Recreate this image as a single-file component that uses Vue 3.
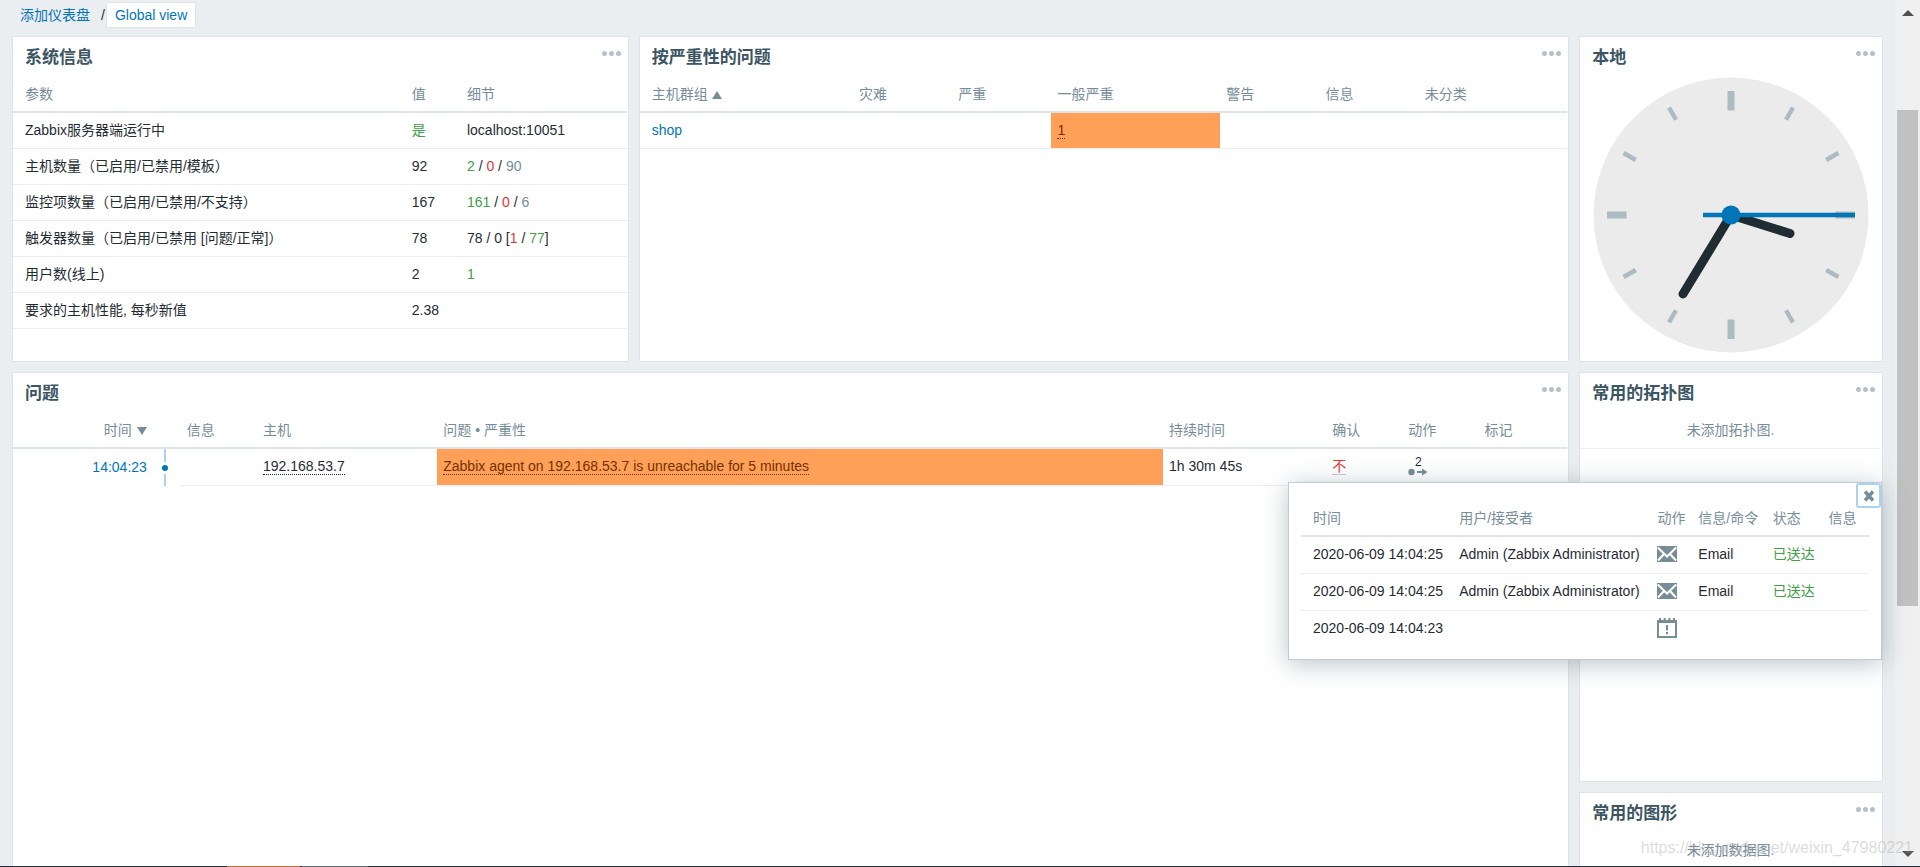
<script setup>
const sysRows = [
  { name: 'Zabbix服务器端运行中', value: '是', good: true, parts: [['localhost:10051', '']] },
  { name: '主机数量（已启用/已禁用/模板）', value: '92', parts: [['2', 'green'], [' / ', ''], ['0', 'red'], [' / ', ''], ['90', 'grey']] },
  { name: '监控项数量（已启用/已禁用/不支持）', value: '167', parts: [['161', 'green'], [' / ', ''], ['0', 'red'], [' / ', ''], ['6', 'grey']] },
  { name: '触发器数量（已启用/已禁用 [问题/正常]）', value: '78', parts: [['78 / 0 [', ''], ['1', 'red'], [' / ', ''], ['77', 'green'], [']', '']] },
  { name: '用户数(线上)', value: '2', parts: [['1', 'green']] },
  { name: '要求的主机性能, 每秒新值', value: '2.38', parts: [] },
]
const actions = [
  { time: '2020-06-09 14:04:25', user: 'Admin (Zabbix Administrator)', icon: 'mail', command: 'Email', status: '已送达' },
  { time: '2020-06-09 14:04:25', user: 'Admin (Zabbix Administrator)', icon: 'mail', command: 'Email', status: '已送达' },
  { time: '2020-06-09 14:04:23', user: '', icon: 'event', command: '', status: '' },
]
const ticks = Array.from({ length: 12 }, (_, i) => ({ angle: i * 30, major: i % 3 === 0 }))
</script>

<template>
  <div class="page">
    <div class="content">
      <nav class="crumbs" aria-label="仪表盘">
        <a href="#">添加仪表盘</a>
        <span class="slash">/</span>
        <a href="#" class="current">Global view</a>
      </nav>

      <main class="dashboard">
        <section class="widget system">
          <header><h4>系统信息</h4><button class="dots" aria-label="操作"><i></i><i></i><i></i></button></header>
          <table>
            <colgroup><col class="s1" /><col class="s2" /><col /></colgroup>
            <thead><tr><th>参数</th><th>值</th><th>细节</th></tr></thead>
            <tbody>
              <tr v-for="row in sysRows" :key="row.name">
                <td>{{ row.name }}</td>
                <td :class="{ green: row.good }">{{ row.value }}</td>
                <td class="pre"><span v-for="(p, i) in row.parts" :key="i" :class="p[1]">{{ p[0] }}</span></td>
              </tr>
            </tbody>
          </table>
        </section>

        <section class="widget severity">
          <header><h4>按严重性的问题</h4><button class="dots" aria-label="操作"><i></i><i></i><i></i></button></header>
          <table>
            <colgroup><col class="v1" /><col class="v2" /><col class="v2" /><col class="v3" /><col class="v2" /><col class="v2" /><col /></colgroup>
            <thead>
              <tr>
                <th><a href="#" class="sort">主机群组<i class="up"></i></a></th>
                <th>灾难</th><th>严重</th><th>一般严重</th><th>警告</th><th>信息</th><th>未分类</th>
              </tr>
            </thead>
            <tbody>
              <tr><td><a href="#">shop</a></td><td></td><td></td><td class="average"><a href="#" class="hint">1</a></td><td></td><td></td><td></td></tr>
            </tbody>
          </table>
        </section>

        <section class="widget clock">
          <header><h4>本地</h4><button class="dots" aria-label="操作"><i></i><i></i><i></i></button></header>
          <svg class="face" viewBox="-138 -138 276 276" role="img" aria-label="时钟">
            <circle r="137.5" fill="#ebebeb" />
            <rect
              v-for="t in ticks" :key="t.angle"
              :x="t.major ? -3.5 : -2.2" y="-124"
              :width="t.major ? 7 : 4.4" :height="t.major ? 19.5 : 14"
              :transform="`rotate(${t.angle})`" fill="#acbbc2"
            />
            <g stroke="#1f2c33" stroke-width="9" stroke-linecap="round">
              <path d="M0 0L59 18.5" />
              <path d="M0 0L-48 79" />
            </g>
            <path d="M-28 0H124" stroke="#0275b8" stroke-width="4.4" />
            <circle r="9.5" fill="#0275b8" />
          </svg>
        </section>

        <section class="widget problems">
          <header><h4>问题</h4><button class="dots" aria-label="操作"><i></i><i></i><i></i></button></header>
          <table>
            <colgroup><col class="p1" /><col class="p2" /><col class="p3" /><col class="p4" /><col class="p5" /><col class="p6" /><col class="p3" /><col class="p3" /><col /></colgroup>
            <thead>
              <tr>
                <th class="right"><a href="#" class="sort">时间<i class="down"></i></a></th><th></th>
                <th>信息</th><th>主机</th><th>问题 • 严重性</th><th>持续时间</th><th>确认</th><th>动作</th><th>标记</th>
              </tr>
            </thead>
            <tbody>
              <tr>
                <td class="right bare"><a href="#">14:04:23</a></td>
                <td class="bare axis"><span class="line"><i></i></span></td>
                <td></td>
                <td><a href="#" class="hint dark">192.168.53.7</a></td>
                <td class="average"><a href="#" class="hint">Zabbix agent on 192.168.53.7 is unreachable for 5 minutes</a></td>
                <td>1h 30m 45s</td>
                <td><a href="#" class="ack">不</a></td>
                <td>
                  <button class="count" aria-label="动作 2"><span>2</span>
                    <svg width="20" height="8" viewBox="0 0 20 8"><circle cx="3.5" cy="4" r="3.2" fill="#768d99" /><path d="M9 3h5V0.5L19.5 4 14 7.5V5H9z" fill="#768d99" /></svg>
                  </button>
                </td>
                <td></td>
              </tr>
            </tbody>
          </table>
        </section>

        <section class="widget maps">
          <header><h4>常用的拓扑图</h4><button class="dots" aria-label="操作"><i></i><i></i><i></i></button></header>
          <p class="empty">未添加拓扑图.</p>
        </section>

        <section class="widget graphs">
          <header><h4>常用的图形</h4><button class="dots" aria-label="操作"><i></i><i></i><i></i></button></header>
          <p class="empty">未添加数据图.</p>
        </section>
      </main>
    </div>

    <div class="scrollbar" aria-hidden="true">
      <i class="arrow-up"></i>
      <div class="track"><div class="thumb"></div></div>
      <i class="arrow-down"></i>
    </div>

    <aside class="popup" role="dialog" aria-label="动作">
      <button class="close" aria-label="关闭">
        <svg width="12" height="12" viewBox="0 0 12 12"><path d="M2 1.5l8 9M10 1.5l-8 9" stroke="#768d99" stroke-width="3.4" /></svg>
      </button>
      <table>
        <colgroup><col class="a1" /><col class="a2" /><col class="a3" /><col class="a4" /><col class="a5" /><col /></colgroup>
        <thead><tr><th>时间</th><th>用户/接受者</th><th>动作</th><th>信息/命令</th><th>状态</th><th>信息</th></tr></thead>
        <tbody>
          <tr v-for="(a, i) in actions" :key="i">
            <td>{{ a.time }}</td>
            <td>{{ a.user }}</td>
            <td>
              <svg v-if="a.icon === 'mail'" class="icon" width="20" height="20" viewBox="0 0 20 20">
                <path d="M0 2h20v16H0z" fill="#768d99" />
                <path d="M0.8 3.5L10 12.500l9.200-9M1 16.500l6-6.500M19 16.500l-6-6.500" fill="none" stroke="#fff" stroke-width="2" />
              </svg>
              <svg v-else class="icon" width="20" height="20" viewBox="0 0 20 20">
                <path d="M1 4h18v15H1z" fill="none" stroke="#768d99" stroke-width="2" />
                <path d="M0 2h20v3H0zM2 0h2v3h-2zM6.700 0h2v3h-2zM11.400 0h2v3h-2zM16 0h2v3h-2zM9 7h2v5.500H9zM9 14h2v2.200H9z" fill="#768d99" />
              </svg>
            </td>
            <td>{{ a.command }}</td>
            <td class="green">{{ a.status }}</td>
            <td></td>
          </tr>
        </tbody>
      </table>
    </aside>

    <div class="watermark">https://blog.csdn.net/weixin_47980221</div>
    <div class="taskbar"><i class="active"></i><i class="open"></i></div>
  </div>
</template>

<style>
html, body, #app { height: 100%; }
body { margin: 0; overflow: hidden; }
</style>

<style scoped>
* { box-sizing: border-box; }
.page {
  position: relative;
  display: flex;
  height: 100vh;
  overflow: hidden;
  background: #ebeef0;
  color: #1f2c33;
  font: 14px/18px "Liberation Sans", "Noto Sans CJK SC", sans-serif;
}
.content { flex: 1; min-width: 0; display: flex; flex-direction: column; padding: 2px 12px 0; }
a { color: #0275b8; text-decoration: none; }
button { margin: 0; padding: 0; border: 0; background: none; font: inherit; color: inherit; cursor: pointer; }
.crumbs { display: flex; align-items: center; height: 26px; padding-left: 8px; margin-bottom: 8px; }
.slash { margin: 0 1px 0 11px; }
.crumbs .current { padding: 3px 8px; line-height: 18px; background: #fff; border: 1px solid #dfe4e7; border-radius: 2px; }

.dashboard {
  flex: 1;
  display: grid;
  grid-template-columns: 617fr 931fr 304fr;
  grid-template-rows: 326px 410px 326px;
  gap: 10px;
}
.widget { min-width: 0; background: #fff; border: 1px solid #dfe4e7; padding-right: 1px; }
.problems { grid-column: 1 / 3; grid-row: 2 / 4; }
.widget header { display: flex; justify-content: space-between; align-items: flex-start; height: 40px; padding: 9px 6px 0 12px; }
h4 { margin: 0; font-size: 17px; line-height: 24px; font-weight: 700; color: #3c5563; }
.dots { display: flex; gap: 2px; padding: 5px 0; }
.dots i { width: 5px; height: 5px; border-radius: 50%; background: #b4c1c9; }

table { width: 100%; table-layout: fixed; border-collapse: separate; border-spacing: 0; }
th, td { height: 36px; padding: 0 6px; text-align: left; white-space: nowrap; border-bottom: 1px solid #ebeef0; }
td { padding-bottom: 2px; }
th { font-weight: 400; color: #768d99; border-bottom: 2px solid #dfe4e7; }
th:first-child, td:first-child { padding-left: 12px; }
.problems td { height: 37px; }
.pre { white-space: pre; }
.right { text-align: right; }
.green { color: #429e47; }
.red { color: #e33734; }
.grey { color: #768d99; }
.s1 { width: 64%; } .s2 { width: 9%; }
.v1 { width: 23%; } .v2 { width: 10.7%; } .v3 { width: 18.2%; }
.p1 { width: 9%; } .p2 { width: 1.8%; } .p3 { width: 4.9%; } .p4 { width: 11.6%; } .p5 { width: 46.7%; } .p6 { width: 10.5%; }
.sort { color: #768d99; }
.sort i { display: inline-block; margin-left: 4px; border: 5px solid transparent; }
.sort .up { border-top: 0; border-bottom: 8px solid #768d99; }
.sort .down { border-bottom: 0; border-top: 8px solid #768d99; margin-left: 5px; }
.average { background: #ffa059; }
.hint { color: #733100; border-bottom: 1px dotted #733100; }
.hint.dark { color: #1f2c33; border-color: #1f2c33; }
.ack { color: #e33734; border-bottom: 1px solid #c0ccd4; }
td.bare { border-bottom: 0; }
td.axis { padding: 0; }
.line { display: flex; justify-content: center; align-items: center; width: 24px; height: 37px; background: linear-gradient(#a8d5ec, #a8d5ec) center / 2px 100% no-repeat; }
.line i { width: 6px; height: 6px; border-radius: 50%; background: #0275b8; box-shadow: 0 0 0 3px #fff; }
.count { display: flex; flex-direction: column; align-items: flex-start; font-size: 12px; line-height: 12px; }
.count span { width: 20px; text-align: center; }
.count svg { display: block; }
.face { display: block; width: 276px; max-width: 100%; margin: 0 auto; }
.empty { margin: 0; height: 36px; line-height: 35px; text-align: center; color: #768d99; border-bottom: 1px solid #ebeef0; }

.scrollbar { width: 25px; display: flex; flex-direction: column; align-items: center; background: #f0f0f0; padding: 10px 0; }
.arrow-up { border: 6px solid transparent; border-top: 0; border-bottom: 6px solid #505050; }
.arrow-down { border: 6px solid transparent; border-bottom: 0; border-top: 6px solid #505050; }
.track { flex: 1; width: 21px; padding-top: 94px; }
.thumb { height: 67%; background: #c1c1c1; }

.popup {
  position: absolute; top: 482px; right: 38px; width: 594px;
  padding: 17px 12px 11px; background: #fff; border: 1px solid #c0ccd4;
  box-shadow: 0 4px 24px rgba(60, 85, 99, .35);
}
.popup th, .popup td { height: 37px; }
.popup tbody tr:last-child td { border-bottom-color: transparent; }
.close {
  position: absolute; top: 0; right: 0; width: 25px; height: 25px;
  display: flex; align-items: center; justify-content: center;
  background: #fff; border: 2px solid #a9d3f3; border-radius: 3px;
}
.icon { display: block; }
.a1 { width: 26.8%; } .a2 { width: 34.9%; } .a3 { width: 7.2%; } .a4 { width: 13.1%; } .a5 { width: 9.8%; }

.watermark { position: absolute; right: 7px; bottom: 8px; font: 16px/22px "Liberation Sans", sans-serif; color: rgba(150, 150, 150, .35); pointer-events: none; }
.taskbar { position: absolute; left: 0; right: 0; bottom: 0; display: flex; gap: 2px; height: 1px; padding-left: 227px; background: #22303b; }
.taskbar i { width: 73px; background: #c07030; }
.taskbar .open { width: 66px; background: #5c6a75; }
</style>
